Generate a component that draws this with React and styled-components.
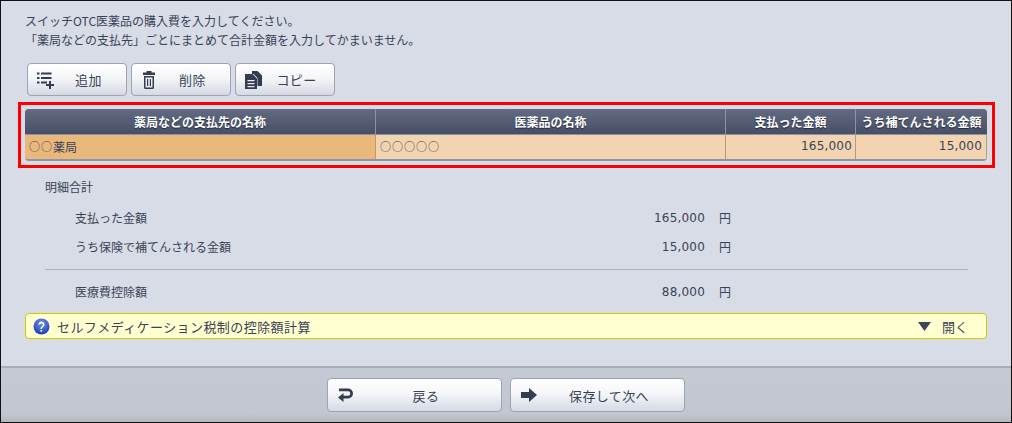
import React from 'react'
import styled, { createGlobalStyle } from 'styled-components'

const Global = createGlobalStyle`
  html, body { margin: 0; padding: 0; }
  body {
    font-family: "Noto Sans CJK JP", "Liberation Sans", sans-serif;
    font-size: 12px;
    color: #3a4356;
  }
`

const Frame = styled.div`
  box-sizing: border-box;
  width: 1012px;
  height: 423px;
  display: flex;
  flex-direction: column;
  background: #d8dce7;
  border: 1px solid #111;
`

const Main = styled.main`
  flex: 1;
  padding: 10px 23px 0 24px;
`

const Intro = styled.p`
  margin: 0;
  font-size: 12px;
  line-height: 19px;
`

const Toolbar = styled.div`
  display: flex;
  gap: 4px;
  margin: 14px 0 0 2px;
`

const Button = styled.button`
  box-sizing: border-box;
  width: ${({ $wide }) => ($wide ? '175px' : '100px')};
  height: ${({ $wide }) => ($wide ? '34px' : '33px')};
  display: flex;
  align-items: center;
  padding: 0 0 0 ${({ $wide }) => ($wide ? '9px' : '8px')};
  border: 1px solid #9ea3b1;
  border-radius: 4px;
  background: linear-gradient(#ffffff 0%, #f5f6f9 45%, #d6d9e3 100%);
  font: inherit;
  font-size: 13px;
  color: #3a4356;
`

const ButtonIcon = styled.svg`
  width: 18px;
  height: 18px;
  flex: none;
  fill: #333c50;
`

const ButtonLabel = styled.span`
  flex: 1;
  text-align: center;
  padding-right: 3px;
  letter-spacing: 0.4px;
`

const Highlight = styled.section`
  box-sizing: border-box;
  width: 977px;
  height: 66px;
  margin: 6px 0 0 -7px;
  padding: 4px;
  border: 3px solid #f00;
`

const Table = styled.div`
  height: 52px;
  width: 962px;
  display: grid;
  grid-template-columns: 351px 350px 130px 1fr;
  grid-template-rows: 26px 26px;
  border-radius: 4px;
  overflow: hidden;
  background: #8f95a4;
`

const HeadCell = styled.div`
  box-sizing: border-box;
  display: flex;
  align-items: center;
  justify-content: center;
  height: 25px;
  background: linear-gradient(#626b82, #474f66);
  border-right: 1px solid #8d93a6;
  color: #fff;
  font-weight: 700;
  font-size: 12px;
  white-space: nowrap;
  text-shadow: 0 1px 1px #20283a;
  &:nth-of-type(4) { border-right: none; }
`

const Cell = styled.div`
  box-sizing: border-box;
  display: flex;
  align-items: center;
  justify-content: ${({ $num }) => ($num ? 'flex-end' : 'flex-start')};
  height: 25px;
  margin-top: -1px;
  padding: 0 3px 2px 4px;
  background: ${({ $active }) => ($active ? '#ebb87c' : '#f3d4b0')};
  border-right: 1px solid #bd9a75;
  border-top: 1px solid #8d93a6;
  font-size: 12px;
  font-family: ${({ $num }) => ($num ? '"DejaVu Sans", sans-serif' : 'inherit')};
  letter-spacing: ${({ $num }) => ($num ? '0.2px' : '0')};
  &:last-child { padding-right: 4px; }
`

const Mark = styled.span`
  font-size: 11px;
  letter-spacing: 1px;
`

const Summary = styled.div`
  padding: 0 0 0 20px;
  margin-top: 9px;
`

const SummaryTitle = styled.div`
  line-height: 20px;
  height: 20px;
  font-size: 12px;
`

const SummaryRow = styled.div`
  display: flex;
  align-items: center;
  height: 29px;
  padding-left: 30px;
  margin-top: ${({ $first }) => ($first ? '6px' : '0')};
`

const RowLabel = styled.span`
  width: 400px;
  font-size: 12px;
`

const RowValue = styled.span`
  width: 230px;
  text-align: right;
  font-family: "DejaVu Sans", sans-serif;
  font-size: 12px;
  letter-spacing: 0.2px;
`

const RowUnit = styled.span`
  margin-left: 14px;
  font-size: 12px;
`

const Rule = styled.hr`
  margin: 8px 19px 7px 0;
  width: 923px;
  border: none;
  border-top: 1px solid #aeb2bd;
`

const Disclosure = styled.div`
  box-sizing: border-box;
  width: 962px;
  height: 26px;
  margin: 7px 0 0;
  display: flex;
  align-items: center;
  padding: 0 18px 0 7px;
  background: #ffffd0;
  border: 1px solid #d0c800;
  border-radius: 4px;
`

const DisclosureTitle = styled.span`
  flex: 1;
  margin-left: 7px;
  font-size: 13px;
  letter-spacing: 0.42px;
`

const DisclosureAction = styled.span`
  font-size: 13px;
`

const Caret = styled.svg`
  width: 13px;
  height: 9px;
  fill: #3e475b;
  margin-right: 11px;
`

const Footer = styled.footer`
  height: 56px;
  box-sizing: border-box;
  flex: none;
  display: flex;
  justify-content: center;
  align-items: flex-start;
  gap: 8px;
  padding: 10px 1px 0 0;
  background: linear-gradient(#c5c9d3 0%, #c2c6d0 85%, #b4b7bf 100%);
  border-top: 2px solid #a9adb9;
`

const AddIcon = () => (
  <ButtonIcon viewBox="0 0 18 18">
    <path d="M1 1.500h2.500v2H1zM5 1.500h10.500v2H5zM1 6h2.500v2H1zM5 6h10.500v2H5zM1 10.500h2.500v2H1zM5 10.500h6v2H5z" />
    <path d="M13 10h2v3h3v2h-3v3h-2v-3h-3v-2h3z" />
  </ButtonIcon>
)

const TrashIcon = () => (
  <ButtonIcon viewBox="0 0 18 18">
    <path d="M6.500 0h5v1.500H15V4H3V1.500h3.500zM4 5h10v11.500a1.500 1.500 0 0 1-1.500 1.500h-7A1.500 1.500 0 0 1 4 16.500zm1.500 1.500V16.500h7V6.500zM7 8h1.200v7H7zM9.800 8H11v7H9.800z" fillRule="evenodd" />
  </ButtonIcon>
)

const CopyIcon = () => (
  <ButtonIcon viewBox="0 0 18 18">
    <path d="M8 0h5.500L18 4.500V15h-4.500V7L9.500 3H8z" />
    <path d="M1 3h7.500L13 7.500V18H1zm2.500 6v1.300h7V9zm0 3v1.300h7V12zm0 3v1.300h7V15z" fillRule="evenodd" />
  </ButtonIcon>
)

const BackIcon = () => (
  <ButtonIcon viewBox="0 0 18 18">
    <path d="M2 2.500h9a5 5 0 0 1 0 10H6.500V16L1 11.500 6.500 7v2.800H11a2.300 2.300 0 0 0 0-4.600H2z" />
  </ButtonIcon>
)

const NextIcon = () => (
  <ButtonIcon viewBox="0 0 18 18">
    <path d="M1 6h8V2l8 7-8 7v-4H1z" />
  </ButtonIcon>
)

const HelpIcon = () => (
  <svg width="17" height="17" viewBox="0 0 17 17">
    <defs>
      <radialGradient id="help" cx="50%" cy="30%" r="70%">
        <stop offset="0%" stopColor="#6f94ea" />
        <stop offset="100%" stopColor="#1c3fb0" />
      </radialGradient>
    </defs>
    <circle cx="8.500" cy="8.500" r="8" fill="url(#help)" />
    <path d="M5.500 6.500a3 3 0 1 1 4.700 2.500c-.9.600-1.200 1-1.200 2H7.500c0-1.500.5-2.100 1.500-2.800a1.500 1.500 0 1 0-2-1.700z" fill="#fff" />
    <rect x="7.500" y="12" width="1.600" height="1.700" fill="#fff" />
  </svg>
)

const rows = [
  { label: '支払った金額', value: '165,000' },
  { label: 'うち保険で補てんされる金額', value: '15,000' },
]

const App = () => (
  <Frame>
    <Global />
    <Main>
      <Intro>スイッチOTC医薬品の購入費を入力してください。</Intro>
      <Intro>「薬局などの支払先」ごとにまとめて合計金額を入力してかまいません。</Intro>
      <Toolbar>
        <Button><AddIcon /><ButtonLabel>追加</ButtonLabel></Button>
        <Button><TrashIcon /><ButtonLabel>削除</ButtonLabel></Button>
        <Button><CopyIcon /><ButtonLabel>コピー</ButtonLabel></Button>
      </Toolbar>
      <Highlight>
        <Table>
          <HeadCell>薬局などの支払先の名称</HeadCell>
          <HeadCell>医薬品の名称</HeadCell>
          <HeadCell>支払った金額</HeadCell>
          <HeadCell>うち補てんされる金額</HeadCell>
          <Cell $active><Mark>○○</Mark>薬局</Cell>
          <Cell><Mark>○○○○○</Mark></Cell>
          <Cell $num>165,000</Cell>
          <Cell $num>15,000</Cell>
        </Table>
      </Highlight>
      <Summary>
        <SummaryTitle>明細合計</SummaryTitle>
        {rows.map((r, i) => (
          <SummaryRow key={r.label} $first={i === 0}>
            <RowLabel>{r.label}</RowLabel>
            <RowValue>{r.value}</RowValue>
            <RowUnit>円</RowUnit>
          </SummaryRow>
        ))}
        <Rule />
        <SummaryRow>
          <RowLabel>医療費控除額</RowLabel>
          <RowValue>88,000</RowValue>
          <RowUnit>円</RowUnit>
        </SummaryRow>
      </Summary>
      <Disclosure>
        <HelpIcon />
        <DisclosureTitle>セルフメディケーション税制の控除額計算</DisclosureTitle>
        <Caret viewBox="0 0 13 9"><path d="M0 0h13L6.500 9z" /></Caret>
        <DisclosureAction>開く</DisclosureAction>
      </Disclosure>
    </Main>
    <Footer>
      <Button $wide><BackIcon /><ButtonLabel>戻る</ButtonLabel></Button>
      <Button $wide><NextIcon /><ButtonLabel>保存して次へ</ButtonLabel></Button>
    </Footer>
  </Frame>
)

export default App
